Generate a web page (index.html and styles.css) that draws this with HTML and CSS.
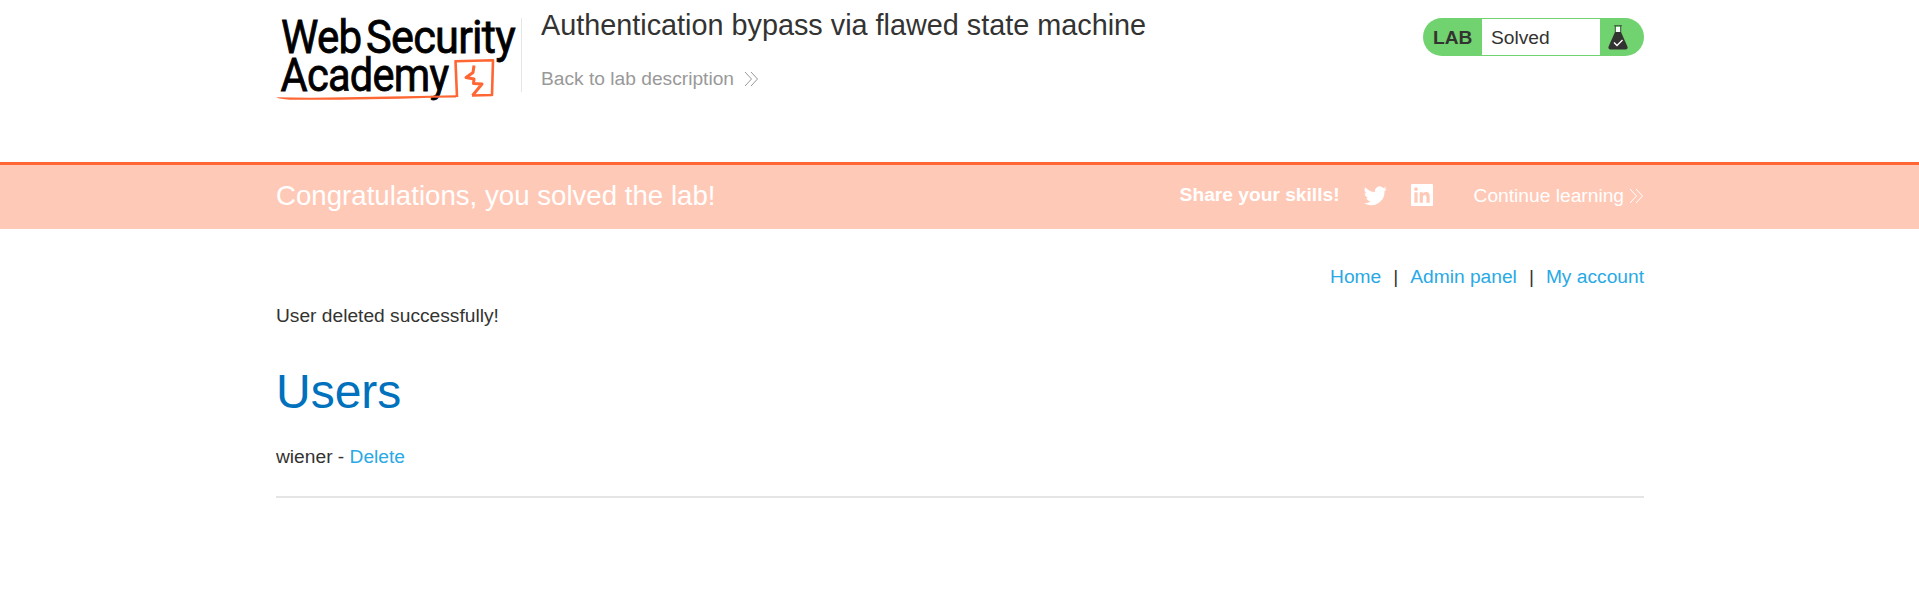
FILE: index.html
```html
<!DOCTYPE html>
<html lang="en">
<head>
<meta charset="utf-8">
<title>Authentication bypass via flawed state machine</title>
<link rel="stylesheet" href="styles.css">
</head>
<body>
<header class="lab-header container">
  <svg class="logo" width="246" height="110" viewBox="270 0 246 110" role="img" aria-label="Web Security Academy">
    <g class="logo-text">
      <text x="281" y="52.600" textLength="80.500" lengthAdjust="spacingAndGlyphs">Web</text>
      <text x="366" y="52.600" textLength="149" lengthAdjust="spacingAndGlyphs">Security</text>
      <text x="280.500" y="91.400" textLength="168" lengthAdjust="spacingAndGlyphs">Academy</text>
    </g>
    <path class="mark" d="M276.500 97.300Q310 98 345 97.300L432 95.700 456 95.300V97.600L432 97.700Q350 100.300 290 99.700 279 99.300 276.500 97.300Z"/>
    <path class="mark-line" d="M457 97L455.500 61.300 493 60.300 492 95 472 95.500"/>
    <path class="mark-bolt" d="M474 65.500L473 72.500 466 77.500 474 79 473.500 83.500 482 84 475 92.500 472.500 95.500"/>
  </svg>
  <div class="title-box">
    <h2 class="title">Authentication bypass via flawed state machine</h2>
    <a class="back">Back to lab description
      <svg class="chevrons" width="15" height="16" viewBox="0 0 15 16"><path d="M1 1l6.500 7L1 15M7 1l6.500 7L7 15"/></svg>
    </a>
  </div>
  <div class="lab-status">
    <span class="lab-tag">LAB</span>
    <span class="lab-state">Solved</span>
    <span class="lab-icon">
      <svg width="20" height="25" viewBox="0 0 20 25">
        <path d="M7.800 2h4.400v5.500H7.800z" fill="#fff"/>
        <path d="M6 .7h8M7.300 1v6.500M12.700 1v6.500" stroke="#333332" stroke-width=".8" fill="none"/>
        <path d="M7 7h6L19.400 21.500q.8 3-1.700 3H2.300q-2.500 0-1.700-3z" fill="#333332"/>
        <path d="M6 17.500l3 3 5.500-5.500" fill="none" stroke="#fff" stroke-width="1.400"/>
      </svg>
    </span>
  </div>
</header>
<section class="banner">
  <div class="banner-inner container">
    <h4 class="congrats">Congratulations, you solved the lab!</h4>
    <span class="share">Share your skills!</span>
    <svg class="twitter" width="23" height="23" viewBox="0 0 24 24"><path fill="#fff" d="M23.600 4.800c-.9.400-1.800.7-2.800.8 1-.6 1.800-1.600 2.200-2.700-1 .6-2 1-3.100 1.200a4.900 4.900 0 0 0-8.400 4.500A13.900 13.900 0 0 1 1.400 3.500a4.900 4.900 0 0 0 1.500 6.600c-.8 0-1.600-.2-2.200-.6v.1c0 2.400 1.700 4.400 3.900 4.800-.7.200-1.500.2-2.200.1.600 2 2.400 3.400 4.600 3.400A9.900 9.900 0 0 1 0 19.900 13.900 13.900 0 0 0 21.400 7.600c.9-.7 1.700-1.600 2.200-2.800z"/></svg>
    <svg class="linkedin" width="22" height="22" viewBox="0 0 22 22"><path fill="#fff" fill-rule="evenodd" d="M1 0h20Q22 0 22 1v20q0 1-1 1h-20Q0 22 0 21v-20Q0 0 1 0zM3.400 8.300v10.400h3.200V8.300zM5 3.200a1.900 1.900 0 1 0 0 3.800 1.900 1.900 0 0 0 0-3.800zM8.700 8.300v10.400h3.200v-5.200c0-1.400.5-2.600 1.900-2.600s1.700 1.200 1.700 2.700v5.100h3.200V13c0-2.800-.8-4.900-3.900-4.900-1.500 0-2.500.8-2.900 1.600V8.300z"/></svg>
    <a class="continue">Continue learning
      <svg class="chevrons" width="15" height="16" viewBox="0 0 15 16"><path d="M1 1l6.500 7L1 15M7 1l6.500 7L7 15"/></svg>
    </a>
  </div>
</section>
<main class="container">
  <nav class="top-links"><a>Home</a><span>|</span><a>Admin panel</a><span>|</span><a>My account</a></nav>
  <p class="message">User deleted successfully!</p>
  <h1 class="users">Users</h1>
  <div class="user-row">wiener - <a>Delete</a></div>
  <hr class="rule">
</main>
</body>
</html>
```
FILE: styles.css
```css
* { box-sizing: border-box; }
body {
  margin: 0;
  background: #fff;
  color: #333332;
  font-family: "Liberation Sans", Arial, sans-serif;
  font-size: 19.2px;
  line-height: 24px;
}
h1, h2, h4, p { margin: 0; font-weight: 400; }
.container { width: 1368px; margin: 0 0 0 276px; }
.lab-header { display: flex; height: 162px; }
.logo { flex: none; margin-left: -6px; overflow: visible; }
.logo-text { font-family: Roboto, sans-serif; font-size: 46px; font-weight: 400; fill: #000; stroke: #000; stroke-width: .8; letter-spacing: -.8px; }
.mark { fill: #ff6633; }
.mark-line, .mark-bolt { fill: none; stroke: #ff6633; stroke-width: 2.6; stroke-linejoin: round; }
.mark-bolt { stroke-width: 3; }
.title-box {
  display: flex;
  flex-direction: column;
  height: 74px;
  margin: 18px 0 0 5px;
  padding-left: 19px;
  border-left: 1px solid #e5e5e5;
}
.title { font-size: 28.8px; line-height: 34px; margin-top: -10px; }
.back { display: flex; align-items: center; gap: 10px; margin-top: 25px; color: #999; }
.chevrons { flex: none; fill: none; stroke: currentColor; stroke-width: 1; }
.lab-status {
  display: flex;
  width: 221px;
  height: 38px;
  margin: 18px 0 0 auto;
  padding: 1px 0;
  border-radius: 19px;
  background: #70d36f;
  line-height: 38px;
}
.lab-tag { width: 59px; padding-left: 10px; font-weight: 700; }
.lab-state { width: 118px; padding-left: 9px; background: #fff; }
.lab-icon { display: flex; padding: 6px 0 0 8px; }
.banner { height: 67px; border-top: 3px solid #ff6633; background: #ffc9b7; color: #fff; }
.banner-inner { display: flex; align-items: center; height: 61px; }
.congrats { font-size: 27.65px; margin-right: auto; }
.share { font-weight: 700; margin-top: -2px; }
.twitter { margin-left: 24px; }
.linkedin { margin-left: 24px; margin-top: -1px; }
.continue { display: flex; align-items: center; gap: 5px; margin-left: 41px; }
.top-links { display: flex; justify-content: flex-end; gap: 12px; padding-top: 36px; }
.top-links a, .user-row a { color: #29a9e5; }
.message { margin-top: 15px; }
.users { margin-top: 35px; font-size: 48px; line-height: 58px; color: #0071bd; }
.user-row { margin-top: 24px; }
.rule { height: 2px; margin: 27px 0 0; border: 0; background: #e5e5e5; }
```
